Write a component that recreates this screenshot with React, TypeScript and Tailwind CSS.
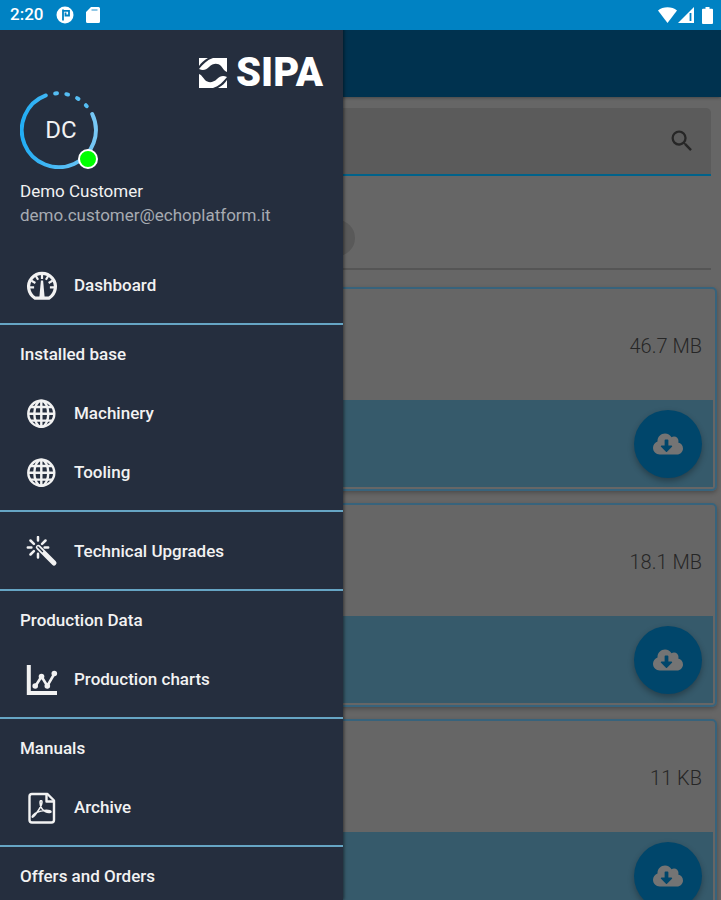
import React, { useState } from "react";
import { FaCloudDownloadAlt } from "react-icons/fa";
import { MdSearch } from "react-icons/md";

type MenuItem = { label: string; icon: React.ReactNode };
type MenuSection = { title?: string; items: MenuItem[] };

const GaugeIcon = () => (
  <svg viewBox="0 0 32 32" className="w-8 h-8" fill="none" stroke="currentColor">
    <path d="M9 28.2A13.4 13.4 0 1 1 23 28.2Z" strokeWidth="3.2" strokeLinejoin="round" />
    <path
      d="M16 4v5M9.700 5.800l2.400 4M22.300 5.800l-2.400 4M5.500 10.800l3.900 2.200M26.500 10.800l-3.900 2.200M3.500 17.300h4.600M28.500 17.300h-4.600"
      strokeWidth="2.200"
    />
    <path d="M14.900 10.500h2.200l1.600 17.500h-5.400z" fill="currentColor" stroke="none" />
  </svg>
);

const GlobeIcon = () => (
  <svg viewBox="0 0 32 32" className="w-8 h-8" fill="none" stroke="currentColor" strokeWidth="2.4">
    <circle cx="15.3" cy="15.8" r="13" />
    <ellipse cx="15.3" cy="15.8" rx="7" ry="13" />
    <path d="M15.3 2.800v26M2.300 15.800h26M4.500 9h21.600M4.500 22.600h21.600" />
  </svg>
);

const WandIcon = () => (
  <svg viewBox="0 0 32 32" className="w-8 h-8" fill="none" stroke="currentColor" strokeLinecap="round">
    <path d="M12.3 11.3 28 27" strokeWidth="5" />
    <path d="m12 11 4.5 4.5" stroke="#252e3e" strokeWidth="1.4" />
    <path
      d="M12 1v3.600M4.500 4.500l3.400 3.400M19.500 4.500l-3.400 3.400M1.800 11.500h3.600M18.600 11.500h3.600M4.500 18.500l3.400-3.400M12 17.800v3.600"
      strokeWidth="2.5"
    />
  </svg>
);

const ChartIcon = () => (
  <svg viewBox="0 0 32 32" className="w-8 h-8" fill="none" stroke="currentColor">
    <path d="M2.8 1v28H31" strokeWidth="4" />
    <path d="m9.5 22 6-9.5 5.8 9.5L28.5 9.5" strokeWidth="2.6" />
    <g fill="currentColor" stroke="none">
      <circle cx="9.2" cy="22" r="2.8" />
      <circle cx="15.5" cy="12.5" r="2.8" />
      <circle cx="21.3" cy="22" r="2.8" />
      <circle cx="28.3" cy="9.5" r="2.8" />
    </g>
  </svg>
);

const PdfIcon = () => (
  <svg
    viewBox="0 0 32 32"
    className="w-8 h-8"
    fill="none"
    stroke="currentColor"
    strokeWidth="2.4"
    strokeLinejoin="round"
    strokeLinecap="round"
  >
    <path d="M6 2h15.5l6.500 6.500V28a2.500 2.500 0 0 1-2.500 2.500H6A2.500 2.500 0 0 1 3.500 28V4.500A2.500 2.500 0 0 1 6 2Z" />
    <path d="M20.500 2.500V9.500H27.500" />
    <path
      d="M15 8.500c-1.500 0-1 4.500.5 7.500s5.500 5 9 4.200c1.500-.8-1.500-2.200-6-1.700S9.500 20.500 7.300 23s-.8 3.200 1.700 0 5.500-7.500 6.500-10.500.3-4-.5-4Z"
      strokeWidth="1.600"
    />
  </svg>
);

const sections: MenuSection[] = [
  { items: [{ label: "Dashboard", icon: <GaugeIcon /> }] },
  {
    title: "Installed base",
    items: [
      { label: "Machinery", icon: <GlobeIcon /> },
      { label: "Tooling", icon: <GlobeIcon /> },
    ],
  },
  { items: [{ label: "Technical Upgrades", icon: <WandIcon /> }] },
  {
    title: "Production Data",
    items: [{ label: "Production charts", icon: <ChartIcon /> }],
  },
  { title: "Manuals", items: [{ label: "Archive", icon: <PdfIcon /> }] },
  { title: "Offers and Orders", items: [] },
];

const files = ["46.7 MB", "18.1 MB", "11 KB"];

function StatusBar() {
  return (
    <div className="relative z-20 flex h-[30px] items-center justify-between bg-[#0082c3] pl-[10px] pr-2 text-white">
      <div className="flex items-center">
        <span className="text-[17px] font-medium">2:20</span>
        <svg viewBox="0 0 18 18" className="ml-[13px] h-[18px] w-[18px]">
          <circle cx="9" cy="9" r="8.500" fill="#fff" />
          <path d="M7 3.500v11M7 4.800h6v4.700H9.500V6.500" fill="none" stroke="#0082c3" strokeWidth="1.800" />
        </svg>
        <svg viewBox="0 0 14 16" className="ml-3 h-4 w-[14px]">
          <path
            d="M5 0h7.500A1.500 1.500 0 0 1 14 1.500v13a1.500 1.500 0 0 1-1.500 1.500h-11A1.500 1.500 0 0 1 0 14.500V5Z"
            fill="#fff"
          />
          <path d="M5.500 3h6" stroke="#6bb4dc" strokeWidth="1.500" />
        </svg>
      </div>
      <div className="flex items-center">
        <svg viewBox="0 0 19 16" className="h-4 w-[19px]">
          <path d="M9.500 16 0 3.500C5 -.8 14-.8 19 3.500Z" fill="#fff" />
        </svg>
        <svg viewBox="0 0 16 16" className="ml-px h-4 w-4">
          <path d="M16 0v16H0Z" fill="#fff" />
          <path d="M12.500 6v8" stroke="#0082c3" strokeWidth="1.800" />
        </svg>
        <svg viewBox="0 0 11 17" className="ml-2 h-[17px] w-[11px]">
          <path
            d="M3.500 0h4v1.800H10a1 1 0 0 1 1 1V16a1 1 0 0 1-1 1H1a1 1 0 0 1-1-1V2.800a1 1 0 0 1 1-1h2.500Z"
            fill="#fff"
          />
        </svg>
      </div>
    </div>
  );
}

function FileCard({ size }: { size: string }) {
  return (
    <article className="rounded-[5px] border-2 border-[#37637c] p-[2px] shadow-[0_2px_4px_rgba(0,0,0,0.25)]">
      <div className="flex h-[109px] items-center justify-end pr-[11px] text-[20px] font-light text-[#262626]">
        <span>{size}</span>
      </div>
      <div className="flex h-[87px] items-center justify-end bg-[#365a6b] pr-[11px]">
        <button
          type="button"
          aria-label="Download"
          className="flex h-[68px] w-[68px] items-center justify-center rounded-full bg-[#00466b] text-[#747474] shadow-[0_3px_6px_rgba(0,0,0,0.3)]"
        >
          <FaCloudDownloadAlt className="h-[30px] w-[30px]" />
        </button>
      </div>
    </article>
  );
}

function MenuRow({ item }: { item: MenuItem }) {
  return (
    <a href="#" className="flex h-[59px] items-center gap-4 pl-[26px]">
      {item.icon}
      <span>{item.label}</span>
    </a>
  );
}

function Logo() {
  return (
    <div className="flex h-9 items-center justify-end gap-2 text-white">
      <svg viewBox="0 0 30 32" className="h-8 w-[30px]" fill="currentColor">
        <path d="M1 1h9C6 3 3 6 1 9Z" />
        <path d="M29 1H15C9 3 5 7 1 12c4 2 7 1 10-2 4-4 9-4 12-1 2 2 3 5 6 6Z" />
        <path d="M29 31h-9c4-2 7-5 9-8Z" />
        <path d="M1 31h14c6-2 10-6 14-11-4-2-7-1-10 2-4 4-9 4-12 1-2-2-3-5-6-6Z" />
      </svg>
      <span className="text-[40px] font-black leading-9">SIPA</span>
    </div>
  );
}

function Drawer() {
  return (
    <aside className="absolute inset-y-0 left-0 z-10 w-[343px] overflow-hidden bg-[#252e3e] pt-[30px] text-[17px] font-medium text-[#f2f2f2] shadow-[1px_0_3px_rgba(0,0,0,0.5)]">
      <header className="h-[216px] px-5 pt-[25px]">
        <Logo />
        {/* Avatar */}
        <div className="relative flex h-[78px] w-[78px] items-center justify-center">
          <svg
            viewBox="0 0 80 80"
            className="absolute inset-0 h-full w-full"
            fill="none"
            strokeLinecap="round"
          >
            <defs>
              <linearGradient id="ring" x1="0" x2="1">
                <stop offset="0" stopColor="#22adf4" />
                <stop offset="1" stopColor="#78c8f5" />
              </linearGradient>
            </defs>
            <path d="M74 23.500A38 38 0 1 1 26.500 4.500" stroke="url(#ring)" strokeWidth="4" />
            <path
              d="m36 2.500 2-.2M47.500 3.200l1.800.5M58.500 7.300l1.500.9M67.500 14.500l1 1.200"
              stroke="#55bdf3"
              strokeWidth="4"
            />
          </svg>
          <span className="pl-1 text-[24px] font-normal">DC</span>
          <span className="absolute bottom-0 right-0 h-5 w-5 rounded-full border-2 border-white bg-[#00ff00]" />
        </div>
        <p className="mt-[10px] font-normal leading-6">Demo Customer</p>
        <p className="font-normal leading-6 text-[#a7abb2]">demo.customer@echoplatform.it</p>
      </header>

      <nav>
        {sections.map((section, i) => (
          <div
            key={i}
            className={`border-b-2 border-[#66a5c4] pb-2 ${section.title ? "" : "pt-[10px]"}`}
          >
            {section.title && (
              <h2 className="flex h-[59px] items-center pl-5">{section.title}</h2>
            )}
            {section.items.map((item) => (
              <MenuRow key={item.label} item={item} />
            ))}
          </div>
        ))}
      </nav>
    </aside>
  );
}

export default function App() {
  const [query, setQuery] = useState("");

  return (
    <div className="relative h-screen overflow-hidden bg-[#666] font-['Roboto',sans-serif]">
      <StatusBar />

      {/* Page behind the drawer, in its dimmed colours */}
      <div className="h-[67px] bg-[#00324f] shadow-[0_1px_3px_rgba(0,0,0,0.3)]" />
      <main>
        <div className="px-[10px] pt-[11px]">
          <div className="flex h-[68px] items-center rounded-t-[5px] border-b-2 border-[#00628a] bg-[#5b5b5b] pr-[15px]">
            <input
              type="text"
              aria-label="Search"
              value={query}
              onChange={(e) => setQuery(e.target.value)}
              className="h-full min-w-0 flex-1 bg-transparent px-4 outline-none"
            />
            <MdSearch className="h-7 w-7 text-[#262626]" />
          </div>
          <div className="flex h-[94px] items-center border-b-2 border-[#555] pt-8">
            <div className="h-9 w-[345px] rounded-full bg-[#595959]" />
          </div>
        </div>
        <div className="flex flex-col gap-3 px-1 pt-[17px]">
          {files.map((size) => (
            <FileCard key={size} size={size} />
          ))}
        </div>
      </main>

      <Drawer />
    </div>
  );
}
